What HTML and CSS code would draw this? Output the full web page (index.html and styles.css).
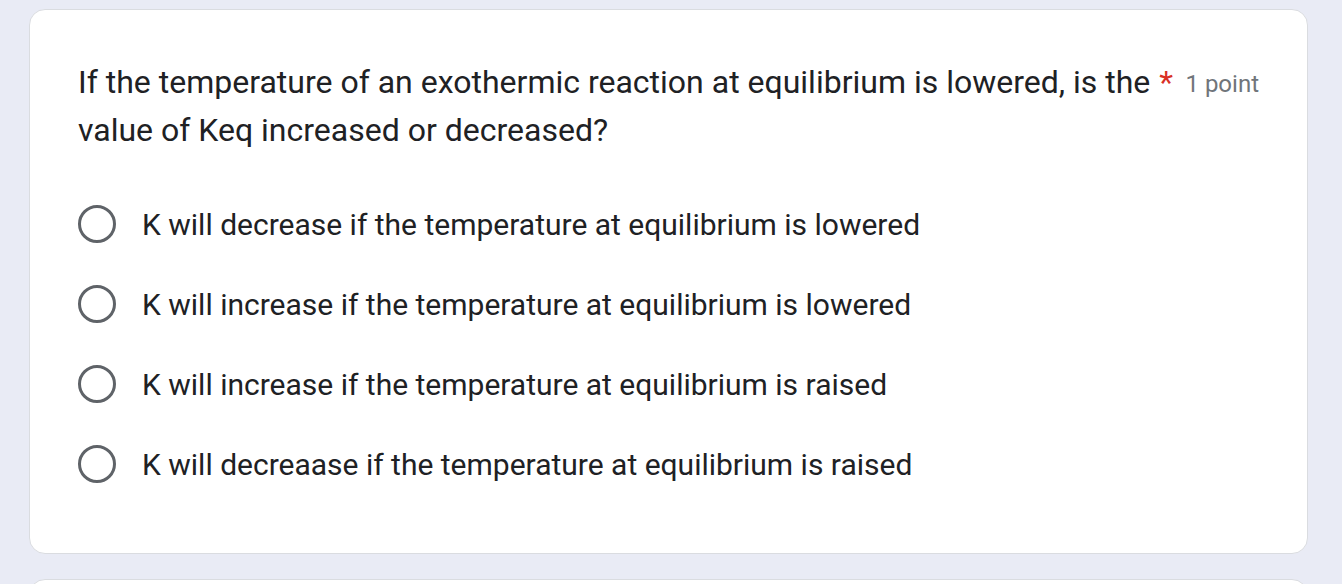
FILE: index.html
```html
<!DOCTYPE html>
<html>
<head>
<meta charset="utf-8">
<link rel="stylesheet" href="styles.css">
</head>
<body>
<div class="page">
  <div class="card">
    <div class="title-row">
      <div class="title">If the temperature of an exothermic reaction at equilibrium is lowered, is <span class="nowrap">the<span class="req">*</span></span> value of Keq increased or decreased?</div>
      <div class="points">1 point</div>
    </div>
    <div class="options">
      <label class="option"><span class="radio"></span><span class="label">K will decrease if the temperature at equilibrium is lowered</span></label>
      <label class="option"><span class="radio"></span><span class="label">K will increase if the temperature at equilibrium is lowered</span></label>
      <label class="option"><span class="radio"></span><span class="label">K will increase if the temperature at equilibrium is raised</span></label>
      <label class="option"><span class="radio"></span><span class="label">K will decreaase if the temperature at equilibrium is raised</span></label>
    </div>
  </div>
  <div class="card next"></div>
</div>
</body>
</html>
```
FILE: styles.css
```css
html, body {
  margin: 0;
  padding: 0;
  background: #e9ebf5;
  font-family: Roboto, "Liberation Sans", sans-serif;
  color: #202124;
}
.page {
  padding: 9px 34px 0 29px;
  display: flex;
  flex-direction: column;
  gap: 25px;
}
.card {
  background: #fff;
  border: 1.5px solid #dadce0;
  border-radius: 16px;
  padding: 48px 48px 49px 48px;
}
.title-row {
  display: flex;
  align-items: flex-start;
  gap: 8px;
}
.title {
  flex: 1;
  min-width: 0;
  font-size: 32px;
  line-height: 48px;
}
.nowrap {
  white-space: nowrap;
}
.req {
  color: #d93025;
  margin-left: 9px;
}
.points {
  flex: none;
  color: #70757a;
  font-size: 24px;
  line-height: 48px;
  padding-top: 2px;
}
.options {
  margin-top: 30px;
  display: flex;
  flex-direction: column;
}
.option {
  display: flex;
  align-items: center;
  height: 80px;
  gap: 26px;
}
.radio {
  width: 32px;
  height: 32px;
  border: 3.5px solid #5f6368;
  border-radius: 50%;
  flex: none;
}
.label {
  font-size: 30px;
}
.next {
  height: 40px;
  padding: 0;
}
```
